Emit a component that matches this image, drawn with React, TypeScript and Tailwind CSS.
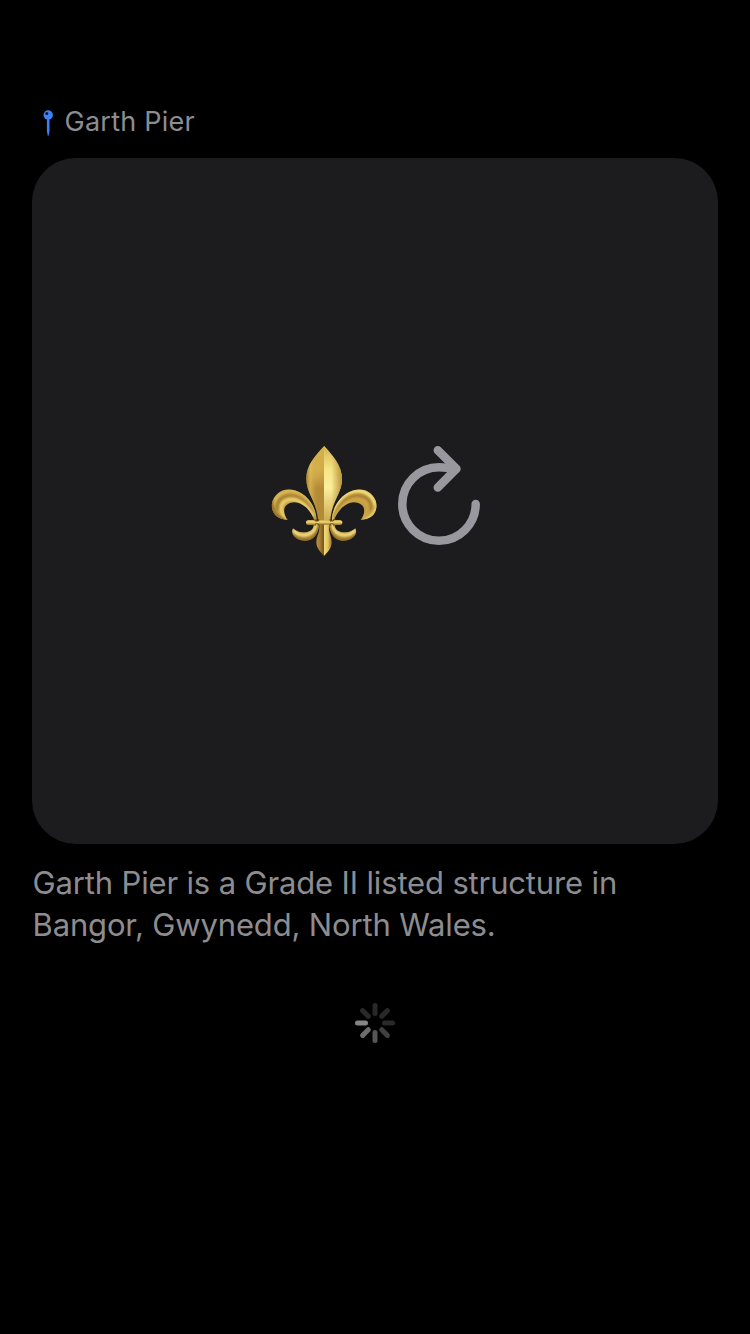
const LEAF =
  'M158 244 C158 208 138 176 112 160 C90 146 62 144 43 159 C22 176 19 202 29 218 C37 233 54 238 71 240 C60 227 56 206 67 196 C82 181 108 185 126 202 C140 215 148 229 151 244 Z';
const HOOK =
  'M149 248 C151 266 141 276 121 277 C104 278 95 272 87 265 C80 276 88 295 111 301 C144 308 166 284 165 248 Z';

function SideLeaves({ side }: { side: 'left' | 'right' }) {
  const lit = side === 'right';
  return (
    <g>
      <path d={LEAF} fill="url(#leaf)" />
      <g clipPath="url(#leafClip)">
        <path
          d="M27 196 C34 160 76 139 112 161 C137 176 154 208 157 240"
          fill="none"
          stroke={lit ? '#f4de80' : '#d9b755'}
          strokeWidth="11"
          filter="url(#soft)"
        />
        <path
          d="M43 211 C34 184 54 166 82 168 C112 170 139 194 153 234"
          fill="none"
          stroke="#94702a"
          strokeWidth="8"
          opacity=".7"
          filter="url(#soft)"
        />
        <path
          d="M68 236 C46 216 46 190 68 181 C95 170 129 192 149 230"
          fill="none"
          stroke={lit ? '#cda446' : '#e9cf70'}
          strokeWidth="11"
          filter="url(#soft)"
        />
        <path d="M23 177 C18 206 32 230 60 241" fill="none" stroke={lit ? '#e6ca68' : '#94702a'} strokeWidth="12" filter="url(#soft)" />
      </g>
      <path d={HOOK} fill="url(#hook)" />
      <g clipPath="url(#hookClip)">
        <path d="M88 270 C98 288 128 290 146 276 C156 268 159 259 158 248" fill="none" stroke="#f8e68c" strokeWidth="8" filter="url(#soft)" />
        <path d="M86 284 C98 303 136 310 153 286 C162 274 165 262 165 248" fill="none" stroke="#8a6622" strokeWidth="7" filter="url(#soft)" />
      </g>
    </g>
  );
}

function FleurDeLis() {
  return (
    <svg width="120" height="122" viewBox="0 0 360 366" aria-hidden="true">
      <defs>
        <filter id="soft" x="-20%" y="-20%" width="140%" height="140%">
          <feGaussianBlur stdDeviation="2.5" />
        </filter>
        <filter id="wide" x="-100%" y="-50%" width="300%" height="200%">
          <feGaussianBlur stdDeviation="9" />
        </filter>
        <clipPath id="leafClip">
          <path d={LEAF} />
        </clipPath>
        <clipPath id="hookClip">
          <path d={HOOK} />
        </clipPath>
        <linearGradient id="leaf" x1="0" y1="0" x2="1" y2="1">
          <stop offset="0" stopColor="#c5a041" />
          <stop offset=".6" stopColor="#c19a3e" />
          <stop offset="1" stopColor="#8a6824" />
        </linearGradient>
        <linearGradient id="hook" x1="0" y1="0" x2="0" y2="1">
          <stop offset="0" stopColor="#d8b752" />
          <stop offset="1" stopColor="#a98334" />
        </linearGradient>
        <linearGradient id="petalLeft" x1="0" y1="0" x2="0" y2="1">
          <stop offset="0" stopColor="#d6b34c" />
          <stop offset=".3" stopColor="#cfa946" />
          <stop offset=".55" stopColor="#b58a36" />
          <stop offset="1" stopColor="#b18a38" />
        </linearGradient>
        <linearGradient id="petalRight" x1="0" y1="0" x2="0" y2="1">
          <stop offset="0" stopColor="#d5b34f" />
          <stop offset=".3" stopColor="#f6e586" />
          <stop offset=".55" stopColor="#fbee9a" />
          <stop offset="1" stopColor="#c9a54b" />
        </linearGradient>
        <linearGradient id="petalEdge" gradientUnits="userSpaceOnUse" x1="180" y1="0" x2="234" y2="0">
          <stop offset=".4" stopColor="#b99236" stopOpacity="0" />
          <stop offset="1" stopColor="#b9933a" />
        </linearGradient>
        <linearGradient id="petalRim" gradientUnits="userSpaceOnUse" x1="126" y1="0" x2="160" y2="0">
          <stop offset="0" stopColor="#a27c2b" />
          <stop offset=".4" stopColor="#dfc05d" stopOpacity=".65" />
          <stop offset="1" stopColor="#c9a443" stopOpacity="0" />
        </linearGradient>
        <linearGradient id="tailLeft" x1="0" y1="0" x2="1" y2="0">
          <stop offset="0" stopColor="#b58f3b" />
          <stop offset=".4" stopColor="#a98031" />
          <stop offset="1" stopColor="#70501a" />
        </linearGradient>
        <linearGradient id="tailRight" x1="0" y1="0" x2="1" y2="0">
          <stop offset="0" stopColor="#f2dc7c" />
          <stop offset=".5" stopColor="#e2c463" />
          <stop offset="1" stopColor="#9c7427" />
        </linearGradient>
        <linearGradient id="band" x1="0" y1="0" x2="0" y2="1">
          <stop offset="0" stopColor="#c9a443" />
          <stop offset=".4" stopColor="#f3dc7b" />
          <stop offset="1" stopColor="#94702a" />
        </linearGradient>
      </defs>

      <SideLeaves side="left" />
      <g transform="translate(361 0) scale(-1 1)">
        <SideLeaves side="right" />
      </g>

      <path d="M181 17 C157 43 126 75 127 117 C128 164 159 181 163 250 L181 250 Z" fill="url(#petalLeft)" />
      <path d="M181 17 C157 43 126 75 127 117 C128 164 159 181 163 250 L181 250 Z" fill="url(#petalRim)" />
      <path d="M180 17 C204 43 234 75 234 117 C233 164 202 181 198 250 L180 250 Z" fill="url(#petalRight)" />
      <path d="M180 17 C204 43 234 75 234 117 C233 164 202 181 198 250 L180 250 Z" fill="url(#petalEdge)" />
      <ellipse cx="158" cy="95" rx="6" ry="32" fill="#e5c864" opacity=".5" filter="url(#wide)" />

      <path d="M165 249 C170 277 157 286 157 307 C157 325 170 337 180 348 L181 249 Z" fill="url(#tailLeft)" />
      <path d="M196 249 C191 277 203 286 203 307 C203 325 191 337 180 348 L180 249 Z" fill="url(#tailRight)" />

      <rect x="126" y="240" width="29" height="15" rx="7.5" fill="url(#band)" />
      <rect x="206" y="240" width="29" height="15" rx="7.5" fill="url(#band)" />
      <rect x="162" y="240" width="37" height="14" rx="7" fill="url(#band)" />
      <path d="M152 238 L165 257 M165 238 L152 257 M197 238 L210 257 M210 238 L197 257" stroke="#70521d" strokeWidth="3.5" />
      <path d="M155 247 H162 M200 247 H207" stroke="#ecd374" strokeWidth="5" strokeLinecap="round" />
    </svg>
  );
}

function ReloadIcon() {
  return (
    <svg
      width="102"
      height="122"
      viewBox="0 0 102 122"
      fill="none"
      stroke="#99989f"
      strokeWidth="8.5"
      strokeLinecap="round"
      strokeLinejoin="round"
      aria-hidden="true"
    >
      <path d="M91.7 64 A36.7 36.7 0 1 1 55 27.3 Q62 27.3 72 29" />
      <path d="M53.8 10.2 L72.4 28.8 L53.8 47.6" />
    </svg>
  );
}

function PinIcon() {
  return (
    <svg width="10" height="26" viewBox="0 0 10 26" aria-hidden="true">
      <path d="M3.9 8 H6.5 V21 L5.6 25.7 H4.8 L3.9 21 Z" fill="#3b82f6" />
      <circle cx="5.2" cy="5" r="4.7" fill="#3b82f6" />
      <circle cx="3.8" cy="3.6" r="1.5" fill="#06152d" />
    </svg>
  );
}

const SPOKES = [
  { angle: 0, color: '#29292b' },
  { angle: 45, color: '#29292b' },
  { angle: 90, color: '#29292b' },
  { angle: 135, color: '#404042' },
  { angle: 180, color: '#565658' },
  { angle: 225, color: '#6c6c6e' },
  { angle: 270, color: '#858588' },
  { angle: 315, color: '#29292b' },
];

function Spinner() {
  return (
    <svg width="40" height="40" viewBox="0 0 40 40" role="status">
      {SPOKES.map(({ angle, color }) => (
        <rect key={angle} x="17.5" y="0" width="5" height="13" rx="2.5" fill={color} transform={`rotate(${angle} 20 20)`} />
      ))}
    </svg>
  );
}

export default function App() {
  return (
    <main className="flex h-[1334px] w-[750px] flex-col bg-black px-8 pt-[101px] font-['Inter','Liberation_Sans',sans-serif] text-[#8d8d91]">
      <header className="flex h-[57px] items-start pl-[11px]">
        <span className="mt-[9px] block">
          <PinIcon />
        </span>
        <h1 className="ml-[11.5px] text-[27px] leading-[42px] tracking-[0.25px]">Garth Pier</h1>
      </header>
      <section className="flex h-[686px] w-[686px] shrink-0 items-center justify-center rounded-[44px] bg-[#1c1c1e]">
        <FleurDeLis />
        <ReloadIcon />
      </section>
      <p className="mt-[18px] pl-[0.5px] text-[31px] leading-[42px] tracking-[-0.15px] whitespace-nowrap">
        Garth Pier is a Grade II listed structure in
        <br />
        Bangor, Gwynedd, North Wales.
      </p>
      <div className="mt-[57px] flex justify-center">
        <Spinner />
      </div>
    </main>
  );
}
